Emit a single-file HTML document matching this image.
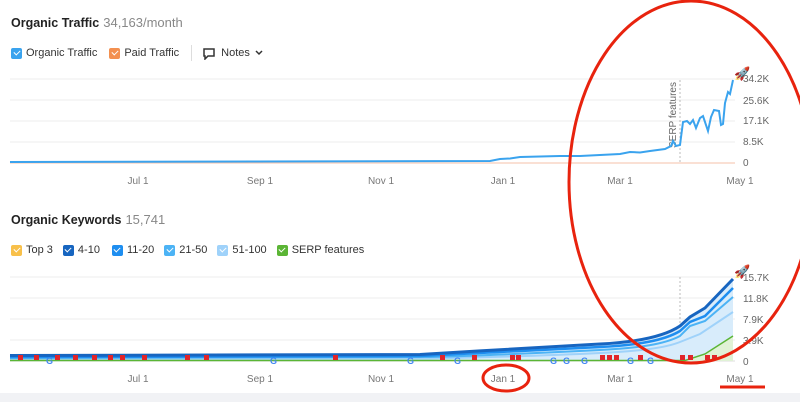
<!DOCTYPE html>
<html><head><style>
body{margin:0;width:800px;height:402px;background:#fff;font-family:"Liberation Sans",sans-serif;overflow:hidden;position:relative}
.t{position:absolute;font-size:12.5px;font-weight:bold;color:#222}
.t span{font-weight:normal;color:#888;margin-left:4px;font-size:13px}
.lg{position:absolute;font-size:11px;color:#333;display:flex;align-items:center}
.cb{width:11px;height:11px;border-radius:2px;display:inline-block;margin-right:4px;position:relative}
.cb:after{content:"";position:absolute;left:3.5px;top:1.5px;width:3px;height:5px;border:solid #fff;border-width:0 1.5px 1.5px 0;transform:rotate(45deg)}
.it{display:flex;align-items:center;margin-right:12px}
.k .it{margin-right:10px}
</style></head><body>
<div class="t" style="left:11px;top:15px">Organic Traffic<span>34,163/month</span></div>
<div class="lg" style="left:11px;top:45px">
<div class="it"><i class="cb" style="background:#3aa3ee"></i>Organic Traffic</div>
<div class="it"><i class="cb" style="background:#f39050"></i>Paid Traffic</div>
<div style="width:1px;height:16px;background:#ddd;margin:0 10px 0 0"></div>
<div class="it"><svg width="14" height="13" style="margin-right:5px"><path d="M2 2h10v7H6l-3 3V9H2z" fill="none" stroke="#333" stroke-width="1.5"/></svg>Notes <svg width="10" height="8" style="margin-left:4px"><path d="M2 2l3 3 3-3" fill="none" stroke="#333" stroke-width="1.5"/></svg></div>
</div>
<div class="t" style="left:11px;top:212px">Organic Keywords<span>15,741</span></div>
<div class="lg k" style="left:11px;top:244px">
<div class="it"><i class="cb" style="background:#f8c04a"></i>Top 3</div>
<div class="it" style="margin-right:12px"><i class="cb" style="background:#1765c0"></i>4-10</div>
<div class="it"><i class="cb" style="background:#1e8ef0"></i>11-20</div>
<div class="it"><i class="cb" style="background:#4cb3f5"></i>21-50</div>
<div class="it"><i class="cb" style="background:#9fd2fa"></i>51-100</div>
<div class="it"><i class="cb" style="background:#5bb535"></i>SERP features</div>
</div>
<div style="position:absolute;left:0;top:393px;width:800px;height:9px;background:#f1f2f5"></div>
<svg width="800" height="402" style="position:absolute;left:0;top:0" font-family="Liberation Sans" font-size="10" fill="#666">
<g stroke="#ececec">
<line x1="10" x2="735" y1="79" y2="79"/><line x1="10" x2="735" y1="100" y2="100"/><line x1="10" x2="735" y1="121" y2="121"/><line x1="10" x2="735" y1="142" y2="142"/>
<line x1="10" x2="735" y1="277" y2="277"/><line x1="10" x2="735" y1="298" y2="298"/><line x1="10" x2="735" y1="319" y2="319"/><line x1="10" x2="735" y1="340" y2="340"/>
</g>
<line x1="10" x2="735" y1="163" y2="163" stroke="#f6c2a8"/>
<line x1="10" x2="735" y1="361" y2="361" stroke="#ddd"/>
<line x1="680" x2="680" y1="80" y2="163" stroke="#bbb" stroke-dasharray="2,2"/>
<line x1="680" x2="680" y1="277" y2="361" stroke="#bbb" stroke-dasharray="2,2"/>
<text transform="translate(676,148) rotate(-90)" font-size="10" fill="#666">SERP features</text>
<path d="M10 162 L490 161 L500 159 L510 158.5 L520 157 L540 156.5 L560 156 L580 156 L600 155 L620 154 L630 152 L640 152.5 L650 151 L665 149 L671 146 L673 141 L676 146 L680 145 L683 122 L687 121 L690 124 L693 120 L696 128 L700 118 L703 116 L705 122 L708 131 L711 117 L714 110 L719 111 L721 125 L723 124 L725 103 L728 92 L730 94 L733 80" fill="none" stroke="#3aa3ee" stroke-width="2"/>
<g font-size="10" fill="#666">
<text x="743" y="82">34.2K</text><text x="743" y="104">25.6K</text><text x="743" y="124">17.1K</text><text x="743" y="145">8.5K</text><text x="743" y="166">0</text>
<text x="743" y="281">15.7K</text><text x="743" y="302">11.8K</text><text x="743" y="323">7.9K</text><text x="743" y="344">3.9K</text><text x="743" y="365">0</text>
</g>
<g font-size="10" fill="#777" text-anchor="middle">
<text x="138" y="184">Jul 1</text><text x="260" y="184">Sep 1</text><text x="381" y="184">Nov 1</text><text x="503" y="184">Jan 1</text><text x="620" y="184">Mar 1</text><text x="740" y="184">May 1</text>
<text x="138" y="382">Jul 1</text><text x="260" y="382">Sep 1</text><text x="381" y="382">Nov 1</text><text x="503" y="382">Jan 1</text><text x="620" y="382">Mar 1</text><text x="740" y="382">May 1</text>
</g>
<path d="M10 356 L420 355 C480 352 540 348 600 345 C640 343 665 337 680 327 L688 318 L705 309 L733 279 L733 361 L10 361Z" fill="#d8ecfb"/>
<path d="M10 359 L430 358.5 C500 357 560 355 600 353 C640 351 665 348 680 342 L700 334 L733 312" fill="none" stroke="#9fd2fa" stroke-width="2"/>
<path d="M10 358 L430 357 C500 355 560 352 600 350 C640 348 665 344 680 336 L690 326 L705 321 L733 297" fill="none" stroke="#4cb3f5" stroke-width="2"/>
<path d="M10 357 L420 356 C480 353 540 350 600 347 C640 345 665 340 680 331 L690 322 L705 316 L733 288" fill="none" stroke="#1e8ef0" stroke-width="2.5"/>
<path d="M10 355.5 L420 354.5 C480 351 540 347 600 344 C640 342 665 336 680 326 L690 317 L705 308 L733 279" fill="none" stroke="#1765c0" stroke-width="3"/>
<path d="M685 360.5 L705 354 L733 336 L733 361 L685 361Z" fill="#e0f2d6"/>
<path d="M10 360.5 L685 360.5 L705 354 L733 336" fill="none" stroke="#5bb535" stroke-width="1.5"/>
<g fill="#e0252a">
<rect x="18" y="355" width="5" height="5"/><rect x="34" y="355" width="5" height="5"/><rect x="55" y="355" width="5" height="5"/><rect x="73" y="355" width="5" height="5"/><rect x="92" y="355" width="5" height="5"/><rect x="108" y="355" width="5" height="5"/><rect x="120" y="355" width="5" height="5"/><rect x="142" y="355" width="5" height="5"/><rect x="185" y="355" width="5" height="5"/><rect x="204" y="355" width="5" height="5"/><rect x="333" y="355" width="5" height="5"/><rect x="440" y="355" width="5" height="5"/><rect x="472" y="355" width="5" height="5"/><rect x="510" y="355" width="5" height="5"/><rect x="516" y="355" width="5" height="5"/><rect x="600" y="355" width="5" height="5"/><rect x="607" y="355" width="5" height="5"/><rect x="614" y="355" width="5" height="5"/><rect x="638" y="355" width="5" height="5"/><rect x="680" y="355" width="5" height="5"/><rect x="688" y="355" width="5" height="5"/><rect x="705" y="355" width="5" height="5"/><rect x="712" y="355" width="5" height="5"/>
</g>
<g font-size="9" font-weight="bold" fill="#4285f4"><text x="46" y="364">G</text><text x="270" y="364">G</text><text x="407" y="364">G</text><text x="454" y="364">G</text><text x="550" y="364">G</text><text x="563" y="364">G</text><text x="581" y="364">G</text><text x="627" y="364">G</text><text x="647" y="364">G</text></g>
<text x="734" y="78" font-size="13">🚀</text><text x="734" y="276" font-size="13">🚀</text>
<g fill="none" stroke="#e8230e" stroke-width="3">
<ellipse cx="691" cy="182" rx="122" ry="181"/>
<ellipse cx="506" cy="378" rx="23" ry="13"/>
<line x1="720" x2="765" y1="387" y2="387"/>
</g>
</svg>
</body></html>
